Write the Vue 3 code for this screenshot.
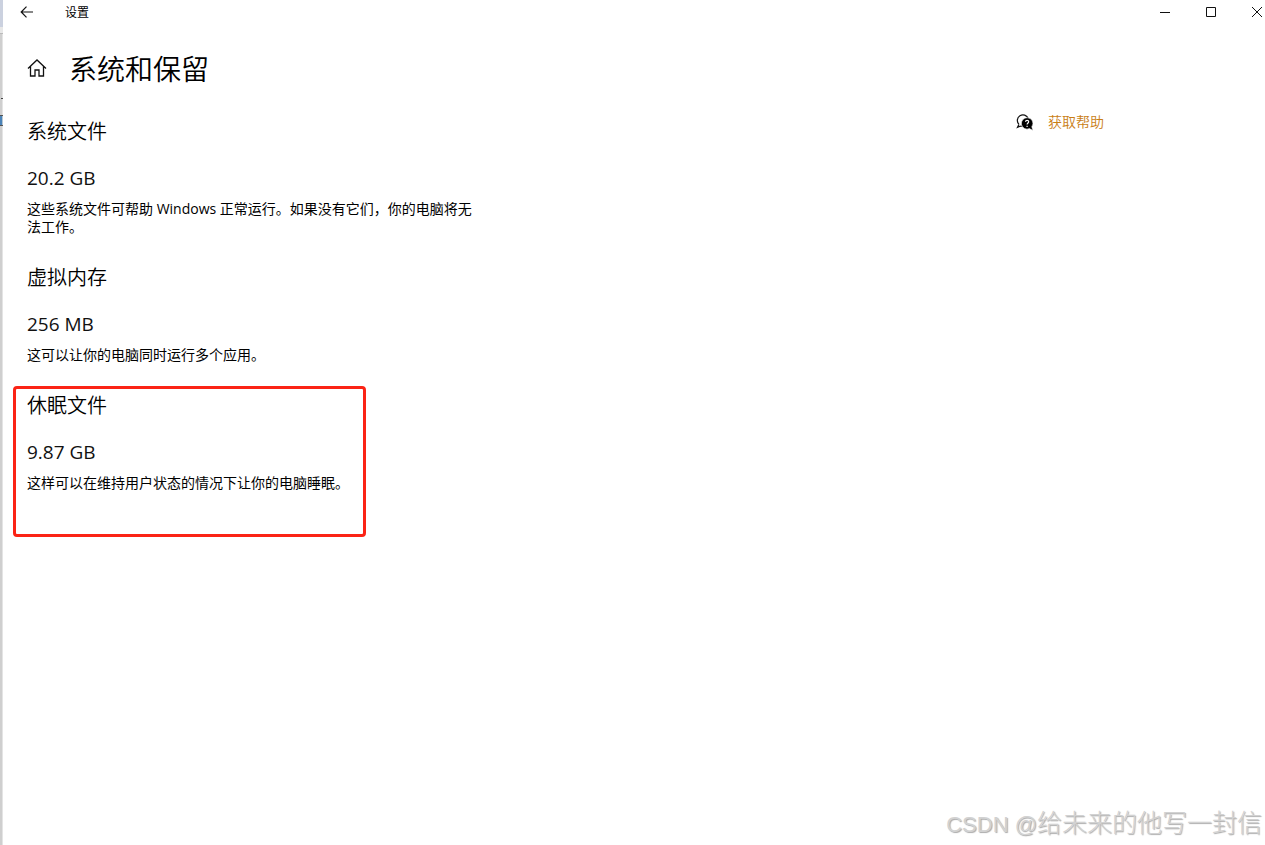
<script setup>
const sections = [
  { title: '系统文件', size: '20.2 GB', text: '这些系统文件可帮助 Windows 正常运行。如果没有它们，你的电脑将无法工作。' },
  { title: '虚拟内存', size: '256 MB', text: '这可以让你的电脑同时运行多个应用。' },
  { title: '休眠文件', size: '9.87 GB', text: '这样可以在维持用户状态的情况下让你的电脑睡眠。', marked: true },
]
</script>

<template>
  <div class="window">
    <div class="edge" aria-hidden="true">
      <i class="edge-top"></i><i class="edge-line"></i><i class="edge-tick"></i><i class="edge-icon"></i>
    </div>
    <header class="titlebar">
      <button class="back" aria-label="返回">
        <svg width="14" height="12" viewBox="0 0 14 12"><path d="M1 6H13M6.500 .7L1.200 6L6.500 11.300" /></svg>
      </button>
      <span class="app-name">设置</span>
      <div class="controls">
        <button aria-label="最小化"><svg width="12" height="12" viewBox="0 0 12 12"><path d="M1 6.500H11" /></svg></button>
        <button aria-label="最大化"><svg width="12" height="12" viewBox="0 0 12 12"><path d="M1.500 1.500H10.500V10.500H1.500Z" /></svg></button>
        <button aria-label="关闭"><svg width="12" height="12" viewBox="0 0 12 12"><path d="M1 1L11 11M11 1L1 11" /></svg></button>
      </div>
    </header>

    <div class="page-head">
      <button class="home" aria-label="主页">
        <svg width="20" height="18" viewBox="0 0 20 18"><path d="M1 9.500L10 1L19 9.500M3.500 7.500V17H8V11H12V17H16.500V7.500" /></svg>
      </button>
      <h1>系统和保留</h1>
    </div>

    <div class="body">
      <main>
        <section v-for="s in sections" :key="s.title" :class="{ marked: s.marked }">
          <h2>{{ s.title }}</h2>
          <p class="size">{{ s.size }}</p>
          <p class="text">{{ s.text }}</p>
        </section>
      </main>
      <aside>
        <svg width="18" height="17" viewBox="0 0 18 17">
          <path class="bubble" d="M3 10.400L1.500 13.300L4.800 12M3 10.400A5.600 5.600 0 1 1 12.200 4.500M4.800 12L7 12.400" />
          <path class="solid" d="M11.200 3.700A5.700 5.700 0 1 0 13.400 14.600L17 16.500L15.800 12.800A5.700 5.700 0 0 0 11.200 3.700Z" />
          <path class="mark" d="M9.500 7.800C9.500 5.900 12.700 5.900 12.700 7.800C12.700 8.900 11.100 9.100 11.100 10.600M11.100 11.700V12.900" />
        </svg>
        <a href="#">获取帮助</a>
      </aside>
    </div>
    <div class="watermark"><span>CSDN @</span>给未来的他写一封信</div>
  </div>
</template>

<style>
body { margin: 0; background: #fff; }
</style>

<style scoped>
.window {
  position: relative;
  box-sizing: border-box;
  min-height: 100vh;
  padding-left: 3px;
  overflow: hidden;
  background: #fff;
  color: #000;
  font-family: "Open Sans", "Noto Sans CJK SC", sans-serif;
}
.edge {
  position: absolute;
  top: 0;
  bottom: 0;
  left: 0;
  width: 3px;
  box-sizing: border-box;
  background: #cfcfcf;
  border-right: 1px solid #e4e4e4;
}
.edge i { position: absolute; left: 0; width: 3px; }
.edge-top { top: 0; height: 27px; background: #cbd1df; }
.edge-line { top: 27px; height: 6px; background: #e8e8e8; border-bottom: 1px solid #bbb; }
.edge .edge-tick { top: 98px; left: 1px; width: 2px; height: 1px; background: #444; }
.edge-icon { top: 115px; height: 9px; background: linear-gradient(90deg, #4b83b8 0 2px, #b9c8d2 2px); border-top: 1px solid #555; border-bottom: 1px solid #555; }
button {
  display: flex;
  align-items: center;
  justify-content: center;
  padding: 0;
  border: 0;
  background: none;
  color: inherit;
}
svg { display: block; fill: none; stroke: #111; stroke-width: 1; }
.titlebar { display: flex; align-items: center; height: 24px; }
.back { width: 48px; height: 24px; }
.back svg { stroke-width: 1.2; }
.app-name { margin-left: 14px; font-size: 12px; line-height: 24px; padding-top: 1px; }
.controls { display: flex; margin-left: auto; margin-right: -15px; }
.controls button { width: 46px; height: 24px; }
.page-head { display: flex; align-items: center; height: 40px; margin-top: 24px; padding-left: 24px; }
.home { width: 20px; height: 24px; }
.home svg { stroke-width: 1.300; }
h1 { margin: 0 0 0 22px; font-size: 28px; line-height: 40px; font-weight: 350; font-family: "Noto Sans CJK SC", sans-serif; }
.body { display: flex; align-items: flex-start; padding: 24px 161px 0 24px; }
main { flex: 0 1 448px; padding-top: 6px; }
section { position: relative; margin-bottom: 28px; }
h2 { margin: 0 0 20px; font-size: 20px; line-height: 28px; font-weight: 350; }
p { margin: 0; }
.size { font-size: 19px; line-height: 24px; color: #111; }
.text { margin-top: 10px; font-size: 14px; line-height: 18px; }
.marked::after {
  content: "";
  position: absolute;
  left: -14px;
  top: -6px;
  width: 347px;
  height: 145px;
  border: 3px solid #fb2315;
  border-radius: 4px;
}
aside { display: flex; align-items: center; gap: 14px; margin-left: auto; }
a { color: #c97e15; font-size: 14px; line-height: 20px; font-weight: 350; text-decoration: none; }
.bubble { stroke-width: 1.200; }
.solid { fill: #000; stroke: #fff; stroke-width: .6; }
.mark { stroke: #fff; stroke-width: 1.200; }
.watermark {
  position: absolute;
  right: 3px;
  bottom: 2px;
  color: #d2d2d2;
  font: 300 25px/36px "Noto Sans CJK SC", sans-serif;
  text-shadow: 1px 1px 1px #aaa;
}
.watermark span { font-family: "Liberation Sans", sans-serif; font-size: 22px; }
</style>
